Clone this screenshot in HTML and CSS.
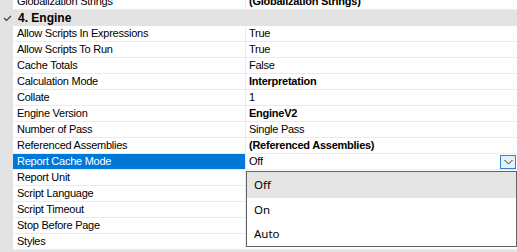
FILE: index.html
```html
<!DOCTYPE html>
<html lang="en">
<head>
    <meta charset="UTF-8">
    <title>Property Grid</title>
    <link rel="stylesheet" href="styles.css">
</head>
<body>
    <div class="grid">
        <div class="row">
            <div class="name">Globalization Strings</div>
            <div class="value bold">(Globalization Strings)</div>
        </div>
        <div class="category">
            <span class="toggle">
                <svg width="9" height="7" viewBox="0 0 9 7"><path d="M1 3 L3.5 5.5 L8 1" fill="none" stroke="#3b3b3b" stroke-width="1.2"/></svg>
            </span>
            <span class="cat-label">4. Engine</span>
        </div>
        <div class="row">
            <div class="name">Allow Scripts In Expressions</div>
            <div class="value">True</div>
        </div>
        <div class="row">
            <div class="name">Allow Scripts To Run</div>
            <div class="value">True</div>
        </div>
        <div class="row">
            <div class="name">Cache Totals</div>
            <div class="value">False</div>
        </div>
        <div class="row">
            <div class="name">Calculation Mode</div>
            <div class="value bold">Interpretation</div>
        </div>
        <div class="row">
            <div class="name">Collate</div>
            <div class="value">1</div>
        </div>
        <div class="row">
            <div class="name">Engine Version</div>
            <div class="value bold">EngineV2</div>
        </div>
        <div class="row">
            <div class="name">Number of Pass</div>
            <div class="value">Single Pass</div>
        </div>
        <div class="row">
            <div class="name">Referenced Assemblies</div>
            <div class="value bold">(Referenced Assemblies)</div>
        </div>
        <div class="row selected">
            <div class="name">Report Cache Mode</div>
            <div class="value">
                <span>Off</span>
                <span class="drop-btn">
                    <svg width="9" height="6" viewBox="0 0 9 6"><path d="M0.5 1 L4.5 5 L8.5 1" fill="none" stroke="#333" stroke-width="1"/></svg>
                </span>
            </div>
        </div>
        <!-- values of these rows sit under the open list -->
        <div class="row">
            <div class="name">Report Unit</div>
            <div class="value"></div>
        </div>
        <div class="row">
            <div class="name">Script Language</div>
            <div class="value"></div>
        </div>
        <div class="row">
            <div class="name">Script Timeout</div>
            <div class="value"></div>
        </div>
        <div class="row">
            <div class="name">Stop Before Page</div>
            <div class="value"></div>
        </div>
        <div class="row">
            <div class="name">Styles</div>
            <div class="value"></div>
        </div>

        <ul class="dropdown">
            <li class="active">Off</li>
            <li>On</li>
            <li>Auto</li>
        </ul>
    </div>
</body>
</html>
```

FILE: styles.css
```css
html, body {
    margin: 0;
    padding: 0;
}
body {
    width: 517px;
    height: 252px;
    overflow: hidden;
    background-color: #e3e3e3;
    font-family: "Liberation Sans", Arial, sans-serif;
    font-size: 11px;
    letter-spacing: -0.25px;
    color: #000;
}
.grid {
    position: relative;
    margin-top: -6px;
    padding-left: 13px;
}
.row {
    display: grid;
    grid-template-columns: 233px 1fr;
    height: 15px;
    border-bottom: 1px solid #ebebeb;
    background-color: #fff;
    line-height: 15px;
}
.name {
    padding-left: 4px;
    border-right: 1px solid #ebebeb;
    white-space: nowrap;
    overflow: hidden;
}
.value {
    padding-left: 3px;
    white-space: nowrap;
    display: flex;
    align-items: center;
    justify-content: space-between;
}
.bold {
    font-weight: bold;
}
.selected .name {
    background-color: #0078d7;
    color: #fff;
}
.drop-btn {
    width: 14px;
    height: 12px;
    margin-right: 1px;
    border: 1px solid #2f7fd6;
    background-color: #e5f1fb;
    display: flex;
    align-items: center;
    justify-content: center;
}
.category {
    display: flex;
    align-items: center;
    height: 16px;
    margin-left: -13px;
    background-color: #e3e3e3;
    font-weight: bold;
    font-size: 12px;
    letter-spacing: 0;
}
.toggle {
    width: 13px;
    display: flex;
    justify-content: center;
    padding-left: 1px;
}
.cat-label {
    padding-left: 4px;
}
.dropdown {
    position: absolute;
    left: 246px;
    top: 177px;
    width: 269px;
    margin: 0;
    padding: 0;
    list-style: none;
    border: 1px solid #646464;
    background-color: #fff;
    font-family: "Noto Sans", "Liberation Sans", sans-serif;
    font-size: 11.5px;
    letter-spacing: 0;
}
.dropdown li {
    height: 24px;
    line-height: 24px;
    padding-left: 7px;
}
.dropdown li.active {
    background-color: #e5e5e5;
    height: 26px;
    line-height: 26px;
}
```
